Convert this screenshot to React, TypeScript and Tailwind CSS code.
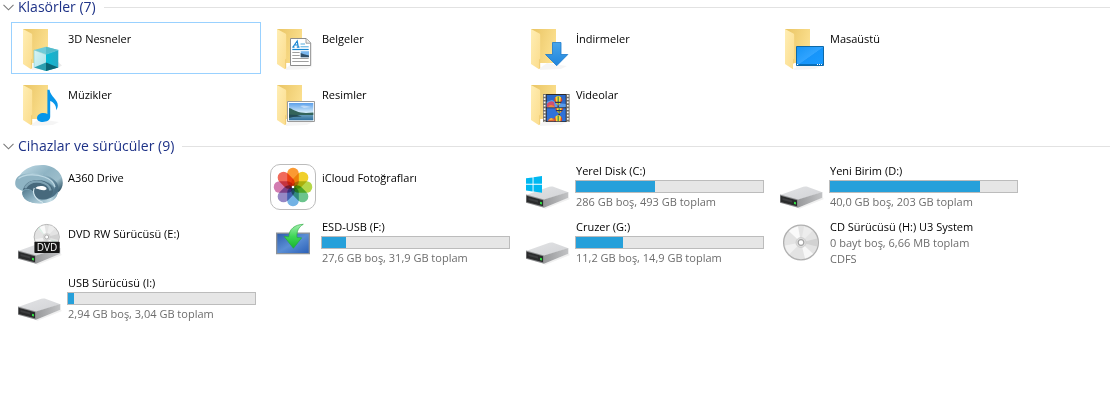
import { useState, type ReactNode } from "react";

function Folder({ children }: { children?: ReactNode }) {
  return (
    <svg viewBox="0 0 48 48" className="size-12 shrink-0" aria-hidden="true">
      <defs>
        <linearGradient id="folderBack" x1="0" y1="0" x2="1" y2="0.4">
          <stop offset="0" stopColor="#e9c463" />
          <stop offset="1" stopColor="#fbdf8e" />
        </linearGradient>
        <linearGradient id="folderFlap" x1="0" y1="0" x2="1" y2="1">
          <stop offset="0" stopColor="#ffeeb4" />
          <stop offset="1" stopColor="#fbdc8c" />
        </linearGradient>
      </defs>
      <path d="M17 44L24 39L44 42L38 45L17 46Z" fill="#000" opacity="0.04" />
      <path d="M8 5H33V39H8Z" fill="url(#folderBack)" />
      <path d="M8 5L16.4 9.4Q17.2 9.8 17.2 11V34.5L16 36V45.3L8 40Z" fill="url(#folderFlap)" />
      <path d="M16 36L17.2 34.5V44L16 45.3Z" fill="#f2cf78" />
      {children}
    </svg>
  );
}

function ObjectsIcon() {
  return (
    <Folder>
      <defs>
        <linearGradient id="cubeLeft" x1="0" y1="0" x2="1" y2="1">
          <stop offset="0" stopColor="#d9f3f4" />
          <stop offset="1" stopColor="#a5e3ea" />
        </linearGradient>
        <linearGradient id="cubeRight" x1="0" y1="0" x2="1" y2="0">
          <stop offset="0" stopColor="#05bcd7" />
          <stop offset="1" stopColor="#27a9c4" />
        </linearGradient>
      </defs>
      <path d="M31 47L43.3 43.4L47 41.5L43.3 38Z" fill="#000" opacity="0.08" />
      <path d="M31 22.7L43.3 26L31 30.3L19 26Z" fill="#6fcbd9" />
      <path d="M31 22.7L43.3 26L31 30.3Z" fill="#54bccc" />
      <path d="M19 26L31 30.3V47L19 43.4Z" fill="url(#cubeLeft)" />
      <path d="M31 30.3L43.3 26V43.4L31 47Z" fill="url(#cubeRight)" />
      <path d="M19 43.4L31 38.6V47Z" fill="#2b9fb0" />
      <path d="M31 38.6L43.3 43.4L31 47Z" fill="#0a6575" />
      <path d="M19 26L31 30.3L43.3 26M19 26V43.4" fill="none" stroke="#5fc3d3" strokeWidth="0.5" />
    </Folder>
  );
}

function DocumentsIcon() {
  return (
    <Folder>
      <path d="M21.5 14.5H37.2L41.7 19V41.5H21.5Z" fill="#fff" stroke="#8c8c8c" />
      <path d="M37 14.8V19.2H41.5" fill="#eee" stroke="#8c8c8c" strokeWidth="0.8" />
      <path d="M24 23L28.2 17L29.3 23M25.5 21H29M23.3 23.2H25.5M27.8 23.2H30.5" fill="none" stroke="#1b86d2" strokeWidth="1.2" />
      <path d="M31.5 20H36M31.5 22.8H39.7" stroke="#50a9dd" />
      <path d="M23.3 25.5H39.7" stroke="#1687d3" strokeWidth="1.2" />
      <path d="M23.3 28.5H30.7M23.3 31.5H30.7M23.3 34.5H39.7M23.3 37.5H39.7" stroke="#a0a0a0" />
      <path d="M31.7 27.2H40V33.2H31.7Z" fill="#79b6ee" />
      <path d="M31.7 29L35 30.2L40 31.5V33.2H31.7Z" fill="#31506a" />
    </Folder>
  );
}

function DownloadsIcon() {
  return (
    <Folder>
      <defs>
        <linearGradient id="downArrow" x1="0" y1="0" x2="0" y2="1">
          <stop offset="0" stopColor="#49a5ea" />
          <stop offset="1" stopColor="#2085dc" />
        </linearGradient>
      </defs>
      <path d="M29.5 18.5H38V30.5H44.8L33.7 41.7L22.5 30.5H29.5Z" fill="url(#downArrow)" stroke="#1b79cc" strokeWidth="0.8" />
    </Folder>
  );
}

function DesktopIcon() {
  return (
    <Folder>
      <defs>
        <linearGradient id="desk" x1="0" y1="0" x2="1" y2="1">
          <stop offset="0" stopColor="#1593f4" />
          <stop offset="0.5" stopColor="#31a4ff" />
          <stop offset="0.52" stopColor="#1795fa" />
          <stop offset="1" stopColor="#1a9bff" />
        </linearGradient>
      </defs>
      <path d="M16 39.5H19V44L16 45Z" fill="#fff" />
      <path d="M19.5 22.5H46.5V41.5H19.5Z" fill="url(#desk)" stroke="#0e69a8" />
      <path d="M20 40H46V41.3H20Z" fill="#0870bd" />
      <path d="M20 40H21.2V41H20ZM40 40H41V41H40ZM42 40H43V41H42ZM44 40H45V41H44Z" fill="#fff" />
    </Folder>
  );
}

function MusicIcon() {
  return (
    <Folder>
      <path
        d="M32.4 9.8H34.5C35.5 17 43 19.3 42.8 25.6C42.7 28 41.9 29.3 41.2 30.2C41.3 25.2 38.8 22.3 35.2 21V36.8C35.2 40.2 31.4 42 27.8 42C24.2 42 22 40.4 22 38C22 35.2 25 33.1 28.5 33.1C30.2 33.1 31.5 33.4 32.4 34Z"
        fill="#0796ea"
      />
    </Folder>
  );
}

function PicturesIcon() {
  return (
    <Folder>
      <defs>
        <linearGradient id="sky" x1="0" y1="0" x2="0" y2="1">
          <stop offset="0" stopColor="#5b9fea" />
          <stop offset="1" stopColor="#e0f3fb" />
        </linearGradient>
        <linearGradient id="lake" x1="0" y1="0" x2="0" y2="1">
          <stop offset="0" stopColor="#7baec6" />
          <stop offset="1" stopColor="#2e6e9c" />
        </linearGradient>
      </defs>
      <path d="M18.5 21.5H45.5V41.5H18.5Z" fill="#fff" stroke="#9b9b9b" />
      <path d="M20 23H44.3V33.5H20Z" fill="url(#sky)" />
      <path d="M20 33H44.3V40.3H20Z" fill="url(#lake)" />
      <path d="M20 28C23 28.3 24 30.5 27 31C30 32.5 34 32.5 37 33L44.3 32.4V35H30L20 36.5Z" fill="#34645b" />
      <path d="M20 34.5L28 35L33 36.5L24 37L20 38Z" fill="#234b55" />
      <path d="M31 26Q35 24.5 42 27L35 28Z" fill="#fff" opacity="0.45" />
    </Folder>
  );
}

function Balloon({ x, y }: { x: number; y: number }) {
  return (
    <g transform={`translate(${x} ${y})`}>
      <path d="M-4 0A4 3.8 0 0 1 4 0Q3.5 3 0 5Q-3.5 3-4 0Z" fill="#d8402d" />
      <path d="M-2.8-2.9A4 4 0 0 1 2.8-2.9L2 3.3L0 5L-2 3.3Z" fill="#fbd936" />
      <path d="M-0.6-3.8H0.6V4.5H-0.6Z" fill="#3d8a4c" />
      <path d="M-3.6 1.6H3.6L2.8 2.8H-2.8Z" fill="#2b3358" />
      <path d="M-0.8 5.2H0.8V6.5H-0.8Z" fill="#4b2b17" />
    </g>
  );
}

function VideosIcon() {
  return (
    <Folder>
      <defs>
        <clipPath id="frameTop">
          <path d="M23.7 15H42.7V27.3H23.7Z" />
        </clipPath>
        <clipPath id="frameBottom">
          <path d="M23.7 28.3H42.7V41.2H23.7Z" />
        </clipPath>
      </defs>
      <path d="M20 14H46.3V42H20Z" fill="#2e2c2a" />
      <path d="M20 14H23V42H20ZM43.3 14H46.3V42H43.3Z" fill="#77736c" />
      <path d="M21.6 15V42M44.8 15V42" stroke="#fbfaf5" strokeWidth="1.7" strokeDasharray="1.7 1.6" />
      <g clipPath="url(#frameTop)">
        <path d="M23 14H43V28H23Z" fill="#2c68c8" />
        <path d="M23 22L29 20L35 23L43 24V28H23Z" fill="#5a9bea" />
        <path d="M23.7 24Q27 20 31 22L32 28H23.7Z" fill="#d05070" />
        <path d="M25 27Q28 23 32 27.5Z" fill="#f08a3a" />
        <Balloon x={35.2} y={20.2} />
      </g>
      <g clipPath="url(#frameBottom)">
        <path d="M23 28H43V42H23Z" fill="#2f72d8" />
        <Balloon x={36.2} y={28.5} />
        <Balloon x={35.2} y={39.6} />
        <path d="M24.5 42Q26 36 31.5 39L31.5 42Z" fill="#df6a35" />
        <path d="M26 40Q28 37 30 39.5Z" fill="#f5d040" />
      </g>
    </Folder>
  );
}

function DriveBody() {
  return (
    <>
      <defs>
        <linearGradient id="driveTop" x1="0" y1="0" x2="1" y2="1">
          <stop offset="0" stopColor="#e2e3e5" />
          <stop offset="1" stopColor="#d2d3d6" />
        </linearGradient>
        <linearGradient id="driveSide" x1="0" y1="0" x2="1" y2="0">
          <stop offset="0" stopColor="#98999b" />
          <stop offset="1" stopColor="#c2c3c5" />
        </linearGradient>
      </defs>
      <path d="M21 44.8L45.3 34.6L47 36L22 46Z" fill="#000" opacity="0.06" />
      <path d="M3 31.9L26.3 23.8Q28 23.2 29.7 23.6L45.3 29.2L21 36.8Z" fill="url(#driveTop)" />
      <path d="M21 36.4L45.3 28.9V34.7L21 44.7Z" fill="url(#driveSide)" />
      <path d="M3 31.5L21 36.4V44.7L3 39.8Z" fill="#8a8b8d" />
      <path d="M3.6 32.8L20 37.2V43.3L3.6 39Z" fill="#2a2b2c" />
      <path d="M5.5 35L15 37.5V39.5L5.5 37Z" fill="#3d3e40" />
      <path d="M17 38.8L19 39.3V41.5L17 41Z" fill="#31df43" />
    </>
  );
}

function DriveIcon({ system = false }: { system?: boolean }) {
  return (
    <svg viewBox="0 0 48 48" className="size-12 shrink-0" aria-hidden="true">
      <DriveBody />
      {system && (
        <path
          d="M3 15.3L9.6 14.4V20.8H3ZM10.5 14.2L19 13V20.8H10.5ZM3 21.7H9.6V28.4L3 27.5ZM10.5 21.7H19V29.7L10.5 28.5Z"
          fill="#00b8f1"
        />
      )}
    </svg>
  );
}

function Disc({ cx, cy, r }: { cx: number; cy: number; r: number }) {
  return (
    <g transform={`translate(${cx} ${cy}) scale(${r / 18})`}>
      <circle r="17.4" fill="#e3e3e3" stroke="#b0b0b0" strokeWidth="1.3" />
      <path d="M0 0L-12-11.2A16.4 16.4 0 0 1-3-16.1Z" fill="#fafafa" />
      <path d="M0 0L12 11.2A16.4 16.4 0 0 1 4 15.9Z" fill="#f7f7f7" />
      <path d="M0 0L15.9-4A16.4 16.4 0 0 1 15.9 4Z" fill="#d2d2d2" />
      <path d="M0 0L-16 3A16.4 16.4 0 0 0-11.5 11.7Z" fill="#f1f1f1" />
      <path d="M0 0L3-16.1A16.4 16.4 0 0 1 11.5-11.7Z" fill="#ededed" />
      <circle r="5" fill="#dedede" stroke="#c6c6c6" strokeWidth="0.7" />
      <circle r="2.8" fill="#fff" stroke="#a2a2a2" strokeWidth="1.2" />
    </g>
  );
}

function CdIcon() {
  return (
    <svg viewBox="0 0 48 48" className="size-12 shrink-0" aria-hidden="true">
      <Disc cx={24} cy={23.5} r={18} />
    </svg>
  );
}

function DvdIcon() {
  return (
    <svg viewBox="0 0 48 48" className="size-12 shrink-0" aria-hidden="true">
      <DriveBody />
      <Disc cx={31.7} cy={18} r={13} />
      <path d="M30 16.5L23 9.5L24.5 8.3ZM34 20L42 22.5L41 24Z" fill="#bfe8d4" opacity="0.6" />
      <rect x="19.4" y="22.7" width="25.3" height="11.3" rx="0.8" fill="#161616" />
      <text x="32" y="32" textAnchor="middle" fontSize="10" fontFamily="Open Sans, sans-serif" fill="#fff">
        DVD
      </text>
    </svg>
  );
}

function A360Icon() {
  return (
    <svg viewBox="0 0 48 48" className="size-12 shrink-0" aria-hidden="true">
      <defs>
        <linearGradient id="swirlBack" x1="0" y1="0" x2="1" y2="0.8">
          <stop offset="0" stopColor="#c2dce6" />
          <stop offset="0.5" stopColor="#8fb4c4" />
          <stop offset="0.8" stopColor="#9dbecb" />
          <stop offset="1" stopColor="#3f6376" />
        </linearGradient>
        <linearGradient id="swirlMid" x1="0" y1="0" x2="1" y2="0.4">
          <stop offset="0" stopColor="#7fa6b7" />
          <stop offset="0.35" stopColor="#a9c9d6" />
          <stop offset="0.65" stopColor="#86acbd" />
          <stop offset="1" stopColor="#4b7085" />
        </linearGradient>
        <linearGradient id="swirlLow" x1="0" y1="0" x2="1" y2="0">
          <stop offset="0" stopColor="#6f97aa" />
          <stop offset="0.45" stopColor="#8db2c2" />
          <stop offset="0.8" stopColor="#c4dde6" />
          <stop offset="1" stopColor="#7fa4b5" />
        </linearGradient>
        <linearGradient id="swirlLobe" x1="0" y1="0" x2="1" y2="1">
          <stop offset="0" stopColor="#547b8f" />
          <stop offset="0.5" stopColor="#86abbc" />
          <stop offset="1" stopColor="#b9d5e0" />
        </linearGradient>
      </defs>
      <path d="M5 12C10 5 18 2 27 2C38 2 48 9 47.8 20C47.7 24 46 27 43.3 29.5C42 20 34 12 24 11Z" fill="url(#swirlBack)" />
      <path d="M0.2 20C0.5 14 4.5 11.5 9.5 11C22 8 36 12 42 20C44.5 25 44 32 38 36.5C31 41 18 41 12 37L7.5 27.8C3 26.5 0 24 0.2 20Z" fill="url(#swirlMid)" />
      <path d="M3 16C9 11 20 11 29 13.5C36 16 40 20.5 40 26C38 21 31 17 24 16.5C16 16 10 20 7.7 27.8C3 26.5-1 21 3 16Z" fill="#8fb4c4" />
      <path d="M3.5 15.5C10 11 21 11 29.5 14C35.5 16 39 20 40 24" fill="none" stroke="#bdd8e3" strokeWidth="1.3" />
      <path d="M7.7 27.5C9.5 20 16 16.3 24 17C32 18 38 22.5 38 28C38 33 33 36.5 27 36.5C21.5 36.5 18 33 18.4 29C13 26 10 26 7.7 27.5Z" fill="#47697c" />
      <path d="M10 25C14 18.5 20 17.8 25.5 18.8C31 20 35 23.5 35.5 27.5" fill="none" stroke="#7fa3b4" strokeWidth="2.4" />
      <path d="M7.7 27.5C13 24 18 27 19 31C21 35 25 37.3 29 36.8C35 36 40.5 33 42.8 28.5C43 36 35 40.6 25.5 40.3C14 40.3 6 36 7.7 27.5Z" fill="url(#swirlLow)" />
      <path d="M7.2 29C11 25.5 16 26.5 18.5 30C20 35 24 38.5 28 40.2C15 41.5 6.5 36.5 7.2 29Z" fill="url(#swirlLobe)" />
      <path d="M19.3 25C17 30 20 36.5 28 39.5" fill="none" stroke="#d5e8ef" strokeWidth="1.1" />
      <path d="M20.5 25C22 22.6 28 22.3 31 24.4C33 27 29 28 24.5 26.4C22.5 25.8 21 25.8 20.5 25Z" fill="#fff" />
    </svg>
  );
}

const petals = ["#fb9a32", "#f0d02c", "#b5d748", "#6bc48d", "#72b2e4", "#9588c5", "#d27bb0", "#f06a5b"];

function PhotosIcon() {
  return (
    <svg viewBox="0 0 48 48" className="size-12 shrink-0" aria-hidden="true">
      <rect x="1.5" y="1.5" width="45" height="45" rx="9.5" fill="#fff" stroke="#bcbcbc" />
      <g style={{ isolation: "isolate" }}>
        {petals.map((color, i) => (
          <rect
            key={color}
            x="18.2"
            y="4.8"
            width="11.6"
            height="19.2"
            rx="5.6"
            fill={color}
            transform={`rotate(${i * 45} 24 24)`}
            style={{ mixBlendMode: "multiply" }}
          />
        ))}
      </g>
      <circle cx="24" cy="24" r="1.3" fill="#fff" />
    </svg>
  );
}

function InstallMediaIcon() {
  return (
    <svg viewBox="0 0 48 48" className="size-12 shrink-0" aria-hidden="true">
      <defs>
        <linearGradient id="screen" x1="0" y1="0" x2="1" y2="1">
          <stop offset="0" stopColor="#2f5fae" />
          <stop offset="0.5" stopColor="#5a8ed5" />
          <stop offset="1" stopColor="#2c61b8" />
        </linearGradient>
        <linearGradient id="green" x1="0" y1="0" x2="0" y2="1">
          <stop offset="0" stopColor="#a4eeb0" />
          <stop offset="0.5" stopColor="#3fd657" />
          <stop offset="1" stopColor="#18b52e" />
        </linearGradient>
      </defs>
      <path d="M7 13.5H41V35.3H7Z" fill="#8d9298" />
      <path d="M8.3 14.8H39.7V34H8.3Z" fill="url(#screen)" />
      <path
        d="M34.3 5.3C26 5.5 20 10 19.8 17.8L15 17.3L24.4 29.3L32.7 18.8L28 18.5C27.5 12.5 29.5 8 34.3 5.3Z"
        fill="url(#green)"
        stroke="#23a637"
        strokeWidth="0.6"
      />
    </svg>
  );
}

type Entry = { name: string; icon: ReactNode; used?: number; details?: string[] };

const folders: Entry[] = [
  { name: "3D Nesneler", icon: <ObjectsIcon /> },
  { name: "Belgeler", icon: <DocumentsIcon /> },
  { name: "İndirmeler", icon: <DownloadsIcon /> },
  { name: "Masaüstü", icon: <DesktopIcon /> },
  { name: "Müzikler", icon: <MusicIcon /> },
  { name: "Resimler", icon: <PicturesIcon /> },
  { name: "Videolar", icon: <VideosIcon /> },
];

const devices: Entry[] = [
  { name: "A360 Drive", icon: <A360Icon /> },
  { name: "iCloud Fotoğrafları", icon: <PhotosIcon /> },
  { name: "Yerel Disk (C:)", icon: <DriveIcon system />, used: 42, details: ["286 GB boş, 493 GB toplam"] },
  { name: "Yeni Birim (D:)", icon: <DriveIcon />, used: 80, details: ["40,0 GB boş, 203 GB toplam"] },
  { name: "DVD RW Sürücüsü (E:)", icon: <DvdIcon /> },
  { name: "ESD-USB (F:)", icon: <InstallMediaIcon />, used: 13, details: ["27,6 GB boş, 31,9 GB toplam"] },
  { name: "Cruzer (G:)", icon: <DriveIcon />, used: 25, details: ["11,2 GB boş, 14,9 GB toplam"] },
  { name: "CD Sürücüsü (H:) U3 System", icon: <CdIcon />, details: ["0 bayt boş, 6,66 MB toplam", "CDFS"] },
  { name: "USB Sürücüsü (I:)", icon: <DriveIcon />, used: 3, details: ["2,94 GB boş, 3,04 GB toplam"] },
];

function Tile({ entry, selected, onSelect }: { entry: Entry; selected: boolean; onSelect: () => void }) {
  return (
    <li>
      <button
        type="button"
        onClick={onSelect}
        className={`flex h-13 w-full gap-1 border pt-px pr-1 pl-[3px] text-left outline-none ${
          selected ? "border-[#99d1ff]" : "border-transparent"
        }`}
      >
        {entry.icon}
        <span className={`block min-w-0 flex-1 text-[#6d6d6d] ${entry.details ? "pt-0" : "pt-[7px]"}`}>
          <span className="block truncate pl-px leading-4 text-black">{entry.name}</span>
          {entry.used !== undefined && (
            <span className="my-px block h-[13px] border border-[#bcbcbc] bg-[#e6e6e6]">
              <span className="block h-full bg-[#26a0da]" style={{ width: `${entry.used}%` }} />
            </span>
          )}
          {entry.details?.map((line) => (
            <span key={line} className="block truncate pl-px leading-4">
              {line}
            </span>
          ))}
        </span>
      </button>
    </li>
  );
}

function Group({
  title,
  entries,
  selected,
  onSelect,
}: {
  title: string;
  entries: Entry[];
  selected: string;
  onSelect: (name: string) => void;
}) {
  const [open, setOpen] = useState(true);
  return (
    <section>
      <h2 className="flex h-3.5 items-center gap-2">
        <button
          type="button"
          aria-expanded={open}
          onClick={() => setOpen(!open)}
          className="flex items-center gap-1 pl-[3px] text-sm leading-3 text-[#1e3287]"
        >
          <svg viewBox="0 0 11 7" className={`h-[7px] w-[11px] ${open ? "" : "-rotate-90"}`} aria-hidden="true">
            <path d="M0.5 0.8L5.5 5.8L10.5 0.8" fill="none" stroke="#7a7a7a" strokeWidth="1.1" />
          </svg>
          {`${title} (${entries.length})`}
        </button>
        <span className="h-px flex-1 bg-[#e2e2e2]" />
      </h2>
      {open && (
        <ul className="mt-2 grid grid-cols-[repeat(auto-fill,250px)] gap-1 pl-[11px] text-[11px]">
          {entries.map((entry) => (
            <Tile
              key={entry.name}
              entry={entry}
              selected={entry.name === selected}
              onSelect={() => onSelect(entry.name)}
            />
          ))}
        </ul>
      )}
    </section>
  );
}

export default function App() {
  const [selected, setSelected] = useState("3D Nesneler");
  return (
    <main className="flex min-h-screen flex-col gap-[9px] bg-white font-['Open_Sans','Noto_Sans',sans-serif]">
      <Group title="Klasörler" entries={folders} selected={selected} onSelect={setSelected} />
      <Group title="Cihazlar ve sürücüler" entries={devices} selected={selected} onSelect={setSelected} />
    </main>
  );
}
